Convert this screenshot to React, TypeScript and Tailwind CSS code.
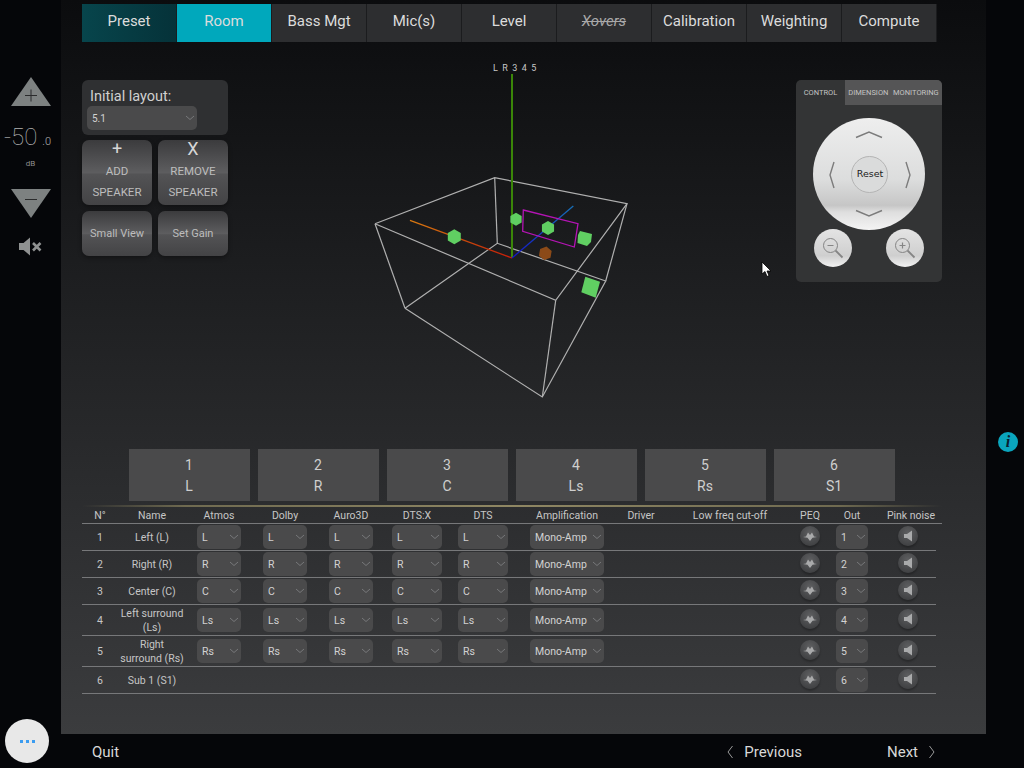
import type { ReactNode } from "react";

const TABS = ["Preset", "Room", "Bass Mgt", "Mic(s)", "Level", "Xovers", "Calibration", "Weighting", "Compute"];

const SPEAKERS = [
  { n: 1, code: "L", name: "Left (L)", amp: true, h: "h-[27px]" },
  { n: 2, code: "R", name: "Right (R)", amp: true, h: "h-[27px]" },
  { n: 3, code: "C", name: "Center (C)", amp: true, h: "h-[27px]" },
  { n: 4, code: "Ls", name: "Left surround (Ls)", amp: true, h: "h-[31px]" },
  { n: 5, code: "Rs", name: "Right surround (Rs)", amp: true, h: "h-[31px]" },
  { n: 6, code: "S1", name: "Sub 1 (S1)", amp: false, h: "h-[27px]" },
];

// column widths shared by the header and the rows, the last one differs because rows stop short of the header line
const HEAD_COLS = "grid-cols-[36px_68px_66px_66px_66px_66px_66px_102px_46px_132px_28px_56px_62px]";
const ROW_COLS = "grid-cols-[36px_68px_66px_66px_66px_66px_66px_102px_46px_132px_28px_56px_56px]";

function Chevron({ className = "" }: { className?: string }) {
  return (
    <svg width="10" height="6" viewBox="0 0 10 6" className={className} fill="none" stroke="#77787a" strokeWidth="1">
      <path d="M1 1l4 3.500L9 1" />
    </svg>
  );
}

function Select({ value, w, h = "h-6" }: { value: string; w: string; h?: string }) {
  return (
    <div className={`flex ${w} ${h} items-center justify-between rounded-[5px] bg-[#4a4a4b] pl-[5px] pr-[2px] text-[#d2d2d2]`}>
      <span className="pt-px">{value}</span>
      <Chevron />
    </div>
  );
}

function GrayButton({ children, className }: { children: ReactNode; className: string }) {
  return (
    <div
      className={`flex w-[70px] flex-col items-center rounded-[7px] bg-[linear-gradient(180deg,#3b3b3d_0%,#5d5d5f_50%,#535355_53%,#434345_100%)] text-[11.5px] text-[#bdbdbd] shadow-[0_2px_4px_rgba(0,0,0,0.35)] ${className}`}
    >
      {children}
    </div>
  );
}

function Peq() {
  return (
    <div className="mb-[2px] flex size-5 items-center justify-center rounded-full bg-[radial-gradient(circle_at_50%_35%,#5e5f61,#37383a)] shadow-[0_2px_2px_rgba(0,0,0,0.25)]">
      <svg width="16" height="11" viewBox="0 0 16 11" fill="#a9aaab">
        <path d="M1 6l3-.5 2-4 2 2.500 2-2.500 2 4 3 .5-4.500.8L8 10 5.500 6.800z" />
      </svg>
    </div>
  );
}

function Pink() {
  return (
    <div className="mb-[2px] flex size-5 items-center justify-center rounded-full bg-[radial-gradient(circle_at_50%_35%,#5e5f61,#37383a)] shadow-[0_2px_2px_rgba(0,0,0,0.25)]">
      <svg width="10" height="12" viewBox="0 0 10 12" fill="#a9aaab">
        <path d="M1 4h3L9 .5v11L4 8H1z" />
      </svg>
    </div>
  );
}

function Cube({ x, y, r, fill = "#60cf62", rot = 0 }: { x: number; y: number; r: number; fill?: string; rot?: number }) {
  const pts = [0, 1, 2, 3, 4, 5]
    .map((i) => {
      const a = ((60 * i + 30 + rot) * Math.PI) / 180;
      return `${x + r * Math.cos(a)},${y + r * Math.sin(a)}`;
    })
    .join(" ");
  return <polygon points={pts} fill={fill} />;
}

function RoomView() {
  const edges = [
    "375,223.700 494.700,177.700 627,203.700 555.700,300.300 375,223.700",
    "405,308.300 497.300,243.300 605.700,281 542.300,397 405,308.300",
    "375,223.700 405,308.300",
    "494.700,177.700 497.300,243.300",
    "627,203.700 605.700,281",
    "555.700,300.300 542.300,397",
  ];
  return (
    <div className="relative h-full flex-1">
      <svg viewBox="228 42 568 407" className="size-full" fill="none">
        <defs>
          <linearGradient id="xAxis" gradientUnits="userSpaceOnUse" x1="410" y1="220" x2="512" y2="258">
            <stop offset="0" stopColor="#d97a10" />
            <stop offset="0.45" stopColor="#c8500c" />
            <stop offset="1" stopColor="#c81c08" />
          </linearGradient>
          <linearGradient id="zAxis" gradientUnits="userSpaceOnUse" x1="512" y1="258" x2="573" y2="206">
            <stop offset="0" stopColor="#1414c8" />
            <stop offset="1" stopColor="#1670b8" />
          </linearGradient>
        </defs>
        {edges.map((pts) => (
          <polyline key={pts} points={pts} stroke="#b0b0b0" strokeWidth="1.200" />
        ))}
        <line x1="512" y1="74" x2="512" y2="258" stroke="#3a8608" strokeWidth="2" />
        <line x1="410" y1="220.300" x2="512" y2="258" stroke="url(#xAxis)" strokeWidth="1.300" />
        <line x1="512" y1="258" x2="573.300" y2="206" stroke="url(#zAxis)" strokeWidth="1.300" />
        <polygon points="523.300,210 578,223.700 574.300,247 522.700,231.300" stroke="#b414b4" strokeWidth="1.300" />
        <Cube x={454.300} y={236.700} r={7.500} />
        <Cube x={516} y={219.300} r={6.500} />
        <Cube x={548} y={228} r={7} />
        <Cube x={545.300} y={253.300} r={6.800} fill="#8b4a18" rot={10} />
        <polygon points="580,231 592,234 591,242 587,246 577.500,243 578,235" fill="#60cf62" />
        <polygon points="585.300,276.700 600,281.700 595.700,297.700 581.300,292.300" fill="#60cf62" />
      </svg>
      <span className="absolute left-[265px] top-[20px] text-[9px] tracking-[0.600px] [word-spacing:1px] text-[#c8c8c8]">L R 3 4 5</span>
    </div>
  );
}

function ControlPanel() {
  return (
    <div className="h-[202px] w-[146px] overflow-hidden rounded-[5px] bg-[#333435]">
      <div className="flex h-[25px] text-[7.500px] text-[#c4c4c4]">
        <div className="flex w-[49px] items-center justify-center">CONTROL</div>
        <div className="flex flex-1 items-center justify-around bg-[#555556] px-[1px]">
          <span>DIMENSION</span>
          <span>MONITORING</span>
        </div>
      </div>
      <div className="relative mx-auto mt-[13px] flex size-[112px] items-center justify-center rounded-full bg-[linear-gradient(180deg,#eeeeee_0%,#dcdddd_55%,#c6c6c6_78%,#dedede_84%,#f4f4f4_100%)]">
        <div className="flex size-[37px] items-center justify-center rounded-full border border-[#b4b4b4] bg-[#dadbdb] pl-[2px] font-['DejaVu_Sans',sans-serif] text-[9.500px] text-[#1a1a1a]">
          Reset
        </div>
        <svg viewBox="0 0 112 112" className="absolute inset-0" fill="none" stroke="#7c7c7c" strokeWidth="1.400">
          <path d="M43 19.500L56 14l13 5.500M43 92.500l13 5.500 13-5.500M21 44l-4 13 4 13M93 44l4 13-4 13" />
        </svg>
      </div>
      <div className="mt-[-1px] flex justify-between px-[18px]">
        <Lens plus={false} />
        <Lens plus />
      </div>
    </div>
  );
}

function Lens({ plus }: { plus: boolean }) {
  return (
    <div className="flex size-[38px] items-center justify-center rounded-full bg-[linear-gradient(180deg,#e4e4e4_0%,#cfcfcf_70%,#f2f2f2_100%)]">
      <svg width="24" height="24" viewBox="0 0 24 24" fill="none" stroke="#858585">
        <circle cx="9.500" cy="9.500" r="7" strokeWidth="1" />
        <path d="M6.500 9.500h6" strokeWidth="1.200" />
        {plus && <path d="M9.500 6.500v6" strokeWidth="1.200" />}
        <path d="M14.500 14.500l7 7" strokeWidth="1.800" />
      </svg>
    </div>
  );
}

function Volume() {
  return (
    <div className="flex flex-col items-center pt-[77px] text-[#b4b4b4]">
      <svg width="40" height="29" viewBox="0 0 40 29">
        <path d="M20 0L40 29H0z" fill="#7d8181" />
        <path d="M14 18.500h12M20 12.500v12" stroke="#2a2b2c" strokeWidth="1" />
      </svg>
      <div className="mt-[16px] flex h-[30px] items-baseline pr-[6px] font-thin leading-[30px]">
        <span className="text-[24px]">-50</span>
        <span className="ml-[5px] text-[11px] font-light">.0</span>
      </div>
      <span className="mt-[6px] text-[8px] text-[#8f8f8f]">dB</span>
      <svg width="40" height="29" viewBox="0 0 40 29" className="mt-[19px]">
        <path d="M0 0h40L20 29z" fill="#7d8181" />
        <path d="M14 10.500h12" stroke="#2a2b2c" strokeWidth="1" />
      </svg>
      <svg width="24" height="19" viewBox="0 0 24 19" className="mt-[19px]" fill="#8f9191">
        <path d="M0 6h4.500L11 0.500v18L4.500 13H0z" />
        <path d="M14 6l7.500 7.500M21.500 6L14 13.500" stroke="#8f9191" strokeWidth="2.600" />
      </svg>
    </div>
  );
}

export default function App() {
  return (
    <div className="relative flex h-[768px] w-[1024px] overflow-hidden bg-[#050609] font-['Roboto','Liberation_Sans',sans-serif]">
      <aside className="flex w-[61px] flex-col justify-between">
        <Volume />
        <div className="mb-[5px] ml-[5px] flex size-11 items-center justify-center gap-[3px] rounded-full bg-[#e8e8e8]">
          <span className="size-[3px] bg-[#3b9cf0]" />
          <span className="size-[3px] bg-[#3b9cf0]" />
          <span className="size-[3px] bg-[#3b9cf0]" />
        </div>
      </aside>

      <div className="w-[925px]">
        <main className="h-[734px] bg-[linear-gradient(180deg,#0b0c0e_0%,#3b3c3e_100%)] pl-[21px] pt-1">
          <nav className="flex h-[38px] w-[855px] text-[15px] text-[#dcdcdc]">
            {TABS.map((t) => (
              <div
                key={t}
                className={`flex w-[95px] items-center justify-center border-r border-[#1b1c1e] pb-[4px] ${
                  t === "Preset"
                    ? "bg-[linear-gradient(90deg,#07454c,#053239)]"
                    : t === "Room"
                      ? "bg-[#00a8bc]"
                      : "bg-[#2d2e30]"
                } ${t === "Xovers" ? "italic line-through text-[#a8a8a8]" : ""}`}
              >
                {t}
              </div>
            ))}
          </nav>

          <section className="flex h-[407px] w-[860px] items-start">
            <div className="w-[146px] pt-[38px]">
              <div className="h-[55px] rounded-[6px] bg-[#2f3032] pl-[5px] pt-[8px]">
                <p className="pl-[3px] text-[14.500px] leading-[18px] text-[#d0d0d0]">Initial layout:</p>
                <div className="text-[10px]">
                  <Select value="5.1" w="w-[110px]" />
                </div>
              </div>
              <div className="mt-[5px] flex justify-between">
                <GrayButton className="h-[65px]">
                  <span className="mt-[-1px] text-[18px] leading-[20px] text-[#d6d6d6]">+</span>
                  <span className="mt-[2px] leading-[21px]">ADD</span>
                  <span className="leading-[21px]">SPEAKER</span>
                </GrayButton>
                <GrayButton className="h-[65px]">
                  <span className="text-[18px] leading-[18px] text-[#d6d6d6]">X</span>
                  <span className="mt-[3px] leading-[21px]">REMOVE</span>
                  <span className="leading-[21px]">SPEAKER</span>
                </GrayButton>
              </div>
              <div className="mt-[6px] flex justify-between">
                <GrayButton className="h-[45px] justify-center pt-px text-[11px]">Small View</GrayButton>
                <GrayButton className="h-[45px] justify-center pt-px text-[11px]">Set Gain</GrayButton>
              </div>
            </div>
            <RoomView />
            <div className="pt-[38px]">
              <ControlPanel />
            </div>
          </section>

          <div className="ml-[47px] flex gap-2">
            {SPEAKERS.map((s) => (
              <div
                key={s.n}
                className="flex h-[52px] w-[121px] flex-col items-center justify-center bg-[#4a4a4b] pr-[1px] pt-[2px] text-[14px] leading-[21px] text-[#cfcfcf]"
              >
                <span>{s.n}</span>
                <span>{s.code}</span>
              </div>
            ))}
          </div>
          <div className="mt-[4px] h-[2px] w-[860px] bg-[linear-gradient(90deg,transparent_0%,#6f6a50_12%,#8f8763_50%,#6f6a50_88%,transparent_100%)]" />

          <div className="w-[860px] text-center text-[10.500px] text-[#c6c6c6]">
            <div className={`grid h-[17px] items-center border-b border-[#77787a] pt-px ${HEAD_COLS}`}>
              <span>N°</span>
              <span>Name</span>
              <span>Atmos</span>
              <span>Dolby</span>
              <span>Auro3D</span>
              <span>DTS:X</span>
              <span>DTS</span>
              <span>Amplification</span>
              <span>Driver</span>
              <span>Low freq cut-off</span>
              <span>PEQ</span>
              <span>Out</span>
              <span>Pink noise</span>
            </div>
            {SPEAKERS.map((s) => (
              <div
                key={s.n}
                className={`grid w-[854px] items-center border-b border-[#77787a] ${ROW_COLS} ${s.h}`}
              >
                <span className="pt-px">{s.n}</span>
                <span className="pt-px leading-[14px]">{s.name}</span>
                {s.amp ? (
                  <>
                    <div className="flex justify-center"><Select value={s.code} w="w-11" /></div>
                    <div className="flex justify-center"><Select value={s.code} w="w-11" /></div>
                    <div className="flex justify-center"><Select value={s.code} w="w-11" /></div>
                    <div className="flex justify-center"><Select value={s.code} w="w-[50px]" /></div>
                    <div className="flex justify-center"><Select value={s.code} w="w-[50px]" /></div>
                    <div className="flex justify-center"><Select value="Mono-Amp" w="w-[74px]" /></div>
                  </>
                ) : (
                  <span className="col-span-6" />
                )}
                <span />
                <span />
                <div className="flex justify-center"><Peq /></div>
                <div className="flex justify-center"><Select value={String(s.n)} w="w-8" /></div>
                <div className="flex justify-center"><Pink /></div>
              </div>
            ))}
          </div>
        </main>

        <footer className="flex h-[34px] items-center justify-between pl-[31px] pr-[50px] pt-[2px] text-[15px] text-[#d8d8d8]">
          <span>Quit</span>
          <div className="flex items-center">
            <svg width="8" height="14" viewBox="0 0 8 14" fill="none" stroke="#9a9a9a">
              <path d="M6.500 1L2 7l4.500 6" />
            </svg>
            <span className="ml-[10px]">Previous</span>
            <span className="ml-[85px]">Next</span>
            <svg width="8" height="14" viewBox="0 0 8 14" fill="none" stroke="#9a9a9a" className="ml-[10px]">
              <path d="M1.500 1L6 7l-4.500 6" />
            </svg>
          </div>
        </footer>
      </div>

      <aside className="w-[38px] pl-[12px] pt-[432px]">
        <div className="flex size-5 items-center justify-center rounded-full bg-[#0aa5bd] font-['Liberation_Serif',serif] text-[16px] font-bold italic text-[#0a2030]">
          i
        </div>
      </aside>

      {/* mouse pointer caught in the screenshot */}
      <svg width="12" height="17" viewBox="0 0 12 17" className="absolute left-[761px] top-[261px]">
        <path d="M1 1v12l3-2.500 2 5 2-1-2-4.500h4z" fill="#fff" stroke="#000" strokeWidth="0.800" />
      </svg>
    </div>
  );
}
